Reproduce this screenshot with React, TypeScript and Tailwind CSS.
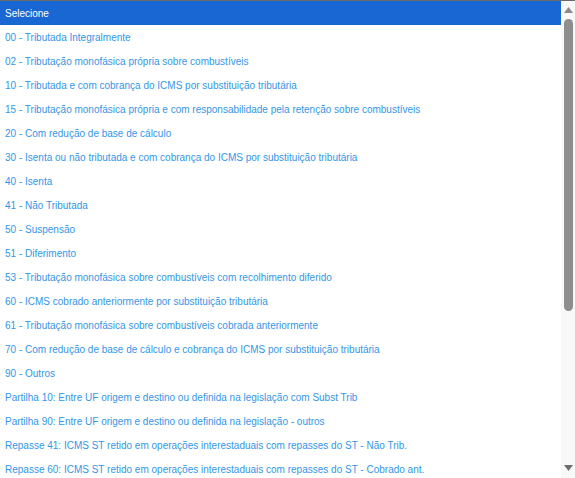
const options = [
  "00 - Tributada Integralmente",
  "02 - Tributação monofásica própria sobre combustíveis",
  "10 - Tributada e com cobrança do ICMS por substituição tributária",
  "15 - Tributação monofásica própria e com responsabilidade pela retenção sobre combustíveis",
  "20 - Com redução de base de cálculo",
  "30 - Isenta ou não tributada e com cobrança do ICMS por substituição tributária",
  "40 - Isenta",
  "41 - Não Tributada",
  "50 - Suspensão",
  "51 - Diferimento",
  "53 - Tributação monofásica sobre combustíveis com recolhimento diferido",
  "60 - ICMS cobrado anteriormente por substituição tributária",
  "61 - Tributação monofásica sobre combustíveis cobrada anteriormente",
  "70 - Com redução de base de cálculo e cobrança do ICMS por substituição tributária",
  "90 - Outros",
  "Partilha 10: Entre UF origem e destino ou definida na legislação com Subst Trib",
  "Partilha 90: Entre UF origem e destino ou definida na legislação - outros",
  "Repasse 41: ICMS ST retido em operações interestaduais com repasses do ST - Não Trib.",
  "Repasse 60: ICMS ST retido em operações interestaduais com repasses do ST - Cobrado ant.",
]

export default function App() {
  return (
    <div className="w-[575px] h-[478px] overflow-hidden bg-white border-t border-[#6b6b6b] flex font-['Liberation_Sans',Arial,sans-serif] text-[10px]">
      <ul className="flex-1 flex flex-col">
        <li className="h-6 shrink-0 flex items-center px-[5px] bg-[#1967d2] text-white">Selecione</li>
        {options.map((o) => (
          <li key={o} className="h-6 shrink-0 flex items-center px-[5px] text-[#3396e8] whitespace-nowrap">
            {o}
          </li>
        ))}
      </ul>
      <div className="w-[14px] bg-[#f8f8f8] flex flex-col items-center">
        <div className="h-[18px] flex items-center justify-center">
          <svg width="9" height="6" viewBox="0 0 9 6"><path d="M4.5 0 L9 6 L0 6 Z" fill="#8a8a8a" /></svg>
        </div>
        <div className="w-[9px] h-[292px] rounded-full bg-[#8e8e8e]" />
        <div className="flex-1" />
        <div className="h-[18px] mb-[1px] flex items-center justify-center">
          <svg width="9" height="6" viewBox="0 0 9 6"><path d="M0 0 L9 0 L4.5 6 Z" fill="#6e6e6e" /></svg>
        </div>
      </div>
    </div>
  )
}
